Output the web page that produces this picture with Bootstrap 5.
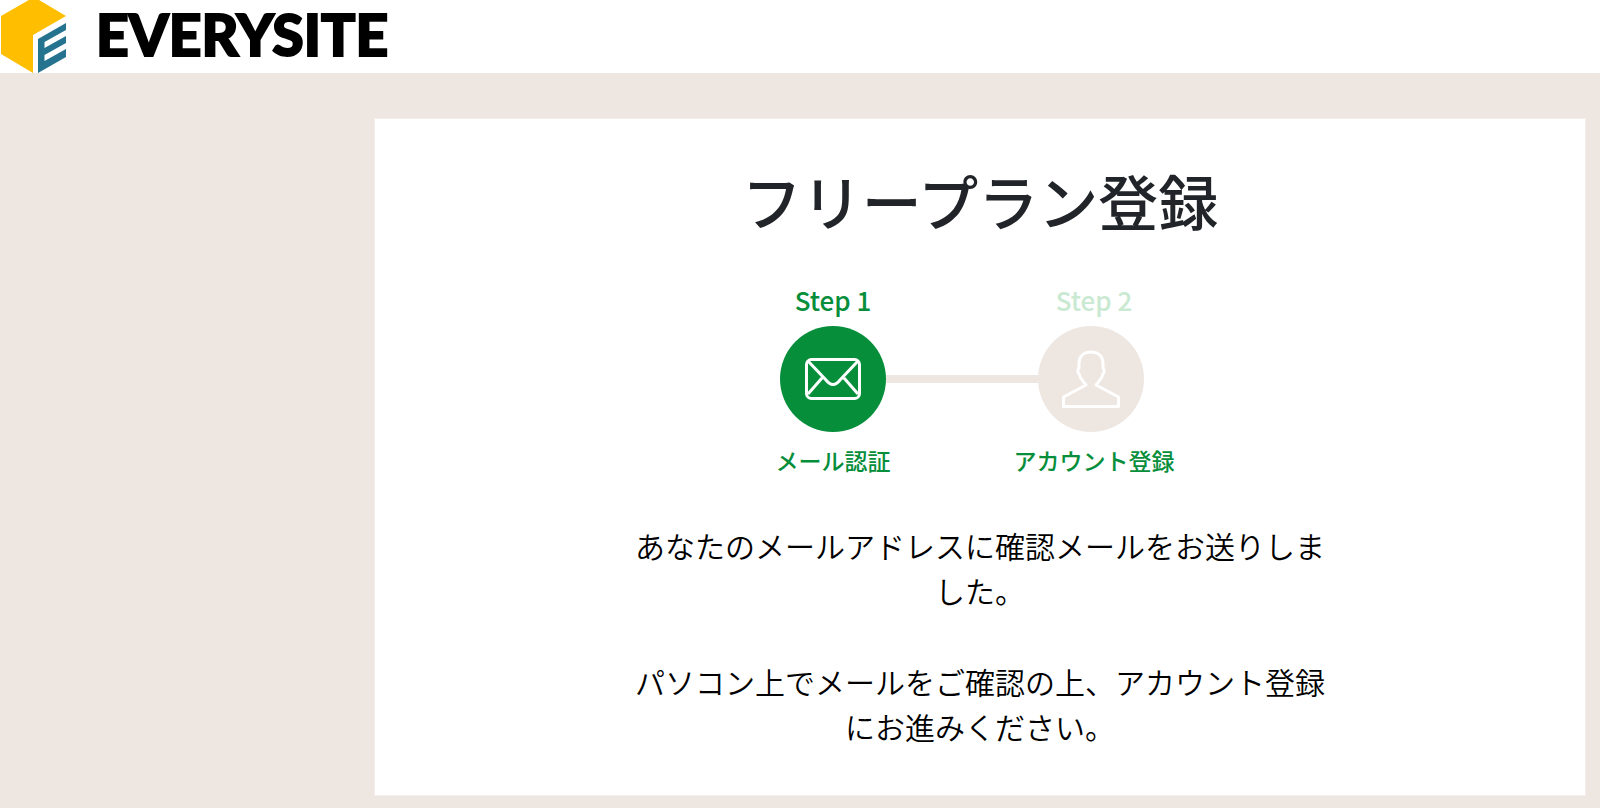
<!DOCTYPE html>
<html lang="ja">
<head>
<meta charset="utf-8">
<meta name="viewport" content="width=device-width, initial-scale=1">
<title>フリープラン登録 | EVERYSITE</title>
<link href="https://cdn.jsdelivr.net/npm/bootstrap@5.3.0/dist/css/bootstrap.min.css" rel="stylesheet">
<style>
  :root { --sand: #eee6e1; --leaf: #068e3b; }
  body { background: var(--sand); font-family: "Noto Sans CJK JP", sans-serif; }
  .site-header { height: 73px; }
  .brand-mark { width: 68px; height: 73px; }
  .brand-name { font: 900 57px/69px Lato, sans-serif; color: #000; -webkit-text-stroke: 2px #000; }
  .page-side { flex: 0 0 374px; }
  .panel { border: 1px solid #f4efec; margin: 45px 14px 12px 0; padding-top: 45px; }
  .panel-title { font-size: 60px; line-height: 72px; font-weight: 500; color: #212529; }
  .steps { padding-right: 36px; margin-top: 48px; }
  .step-item { width: 180px; color: var(--leaf); font-weight: 500; }
  .step-name { font-size: 26px; line-height: 32px; }
  .step-next .step-name { color: #c9e9d2; }
  .step-next .step-name, .step-next .step-label { padding-left: 6px; }
  .step-disc { width: 106px; height: 106px; background: var(--leaf); margin: 10px 0 14px; }
  .step-next .step-disc { background: var(--sand); }
  .step-label { font-size: 23px; line-height: 28px; }
  .step-line { width: 152px; height: 8px; background: var(--sand); margin: 91px -37px 0; }
  .message { font-size: 30px; line-height: 45px; font-weight: 350; color: #000; margin-top: 49px; }
  .message p { margin-bottom: 46px; }
</style>
</head>
<body>
<header class="site-header bg-white overflow-hidden">
  <a href="#" class="d-inline-flex text-decoration-none" aria-label="EVERYSITE">
    <svg class="brand-mark flex-shrink-0" viewBox="0 0 68 73" aria-hidden="true">
      <path fill="#ffbf00" d="M1 16 34-3 66 16 33 35V73L1 54Z"/>
      <path fill="#25738f" d="M38 39 66 23V30L44.500 42V48L66 36V43L44.500 55V61L66 49V57L38 73Z"/>
    </svg>
    <span class="brand-name ms-4 ps-1">EVERYSITE</span>
  </a>
</header>

<div class="d-flex">
  <div class="page-side"></div>
  <main class="panel bg-white flex-grow-1 text-center">
    <h1 class="panel-title mb-0">フリープラン登録</h1>

    <div class="steps d-flex justify-content-center align-items-start">
      <div class="step-item d-flex flex-column align-items-center">
        <div class="step-name">Step 1</div>
        <div class="step-disc rounded-circle">
          <svg class="d-block" width="106" height="106" viewBox="0 0 106 106" fill="none" stroke="#fff" stroke-width="3" stroke-linejoin="round" aria-hidden="true">
            <rect x="26.500" y="33.500" width="53" height="39" rx="5"/>
            <path d="M28 35 46 54Q53 63 60 54L78 35M42 52 28 68M64 52 78 68"/>
          </svg>
        </div>
        <div class="step-label">メール認証</div>
      </div>
      <div class="step-line flex-shrink-0"></div>
      <div class="step-item step-next d-flex flex-column align-items-center">
        <div class="step-name">Step 2</div>
        <div class="step-disc rounded-circle">
          <svg class="d-block" width="106" height="106" viewBox="0 0 106 106" fill="none" stroke="#fff" stroke-width="3" stroke-linejoin="round" aria-hidden="true">
            <path d="M53 26C45 26 41 31 41 37V42C39 44 40 47 41 48C42 53 45 55 48 59L25.500 71V80.500H80.500V71L58 59C61 55 64 53 65 48C66 47 67 44 65 42V37C65 31 61 26 53 26Z"/>
          </svg>
        </div>
        <div class="step-label">アカウント登録</div>
      </div>
    </div>

    <div class="message row g-0 justify-content-center">
      <div class="col-7">
        <p>あなたのメールアドレスに確認メールをお送りしました。</p>
        <p>パソコン上でメールをご確認の上、アカウント登録にお進みください。</p>
      </div>
    </div>
  </main>
</div>
<script src="https://cdn.jsdelivr.net/npm/bootstrap@5.3.0/dist/js/bootstrap.bundle.min.js"></script>
</body>
</html>
